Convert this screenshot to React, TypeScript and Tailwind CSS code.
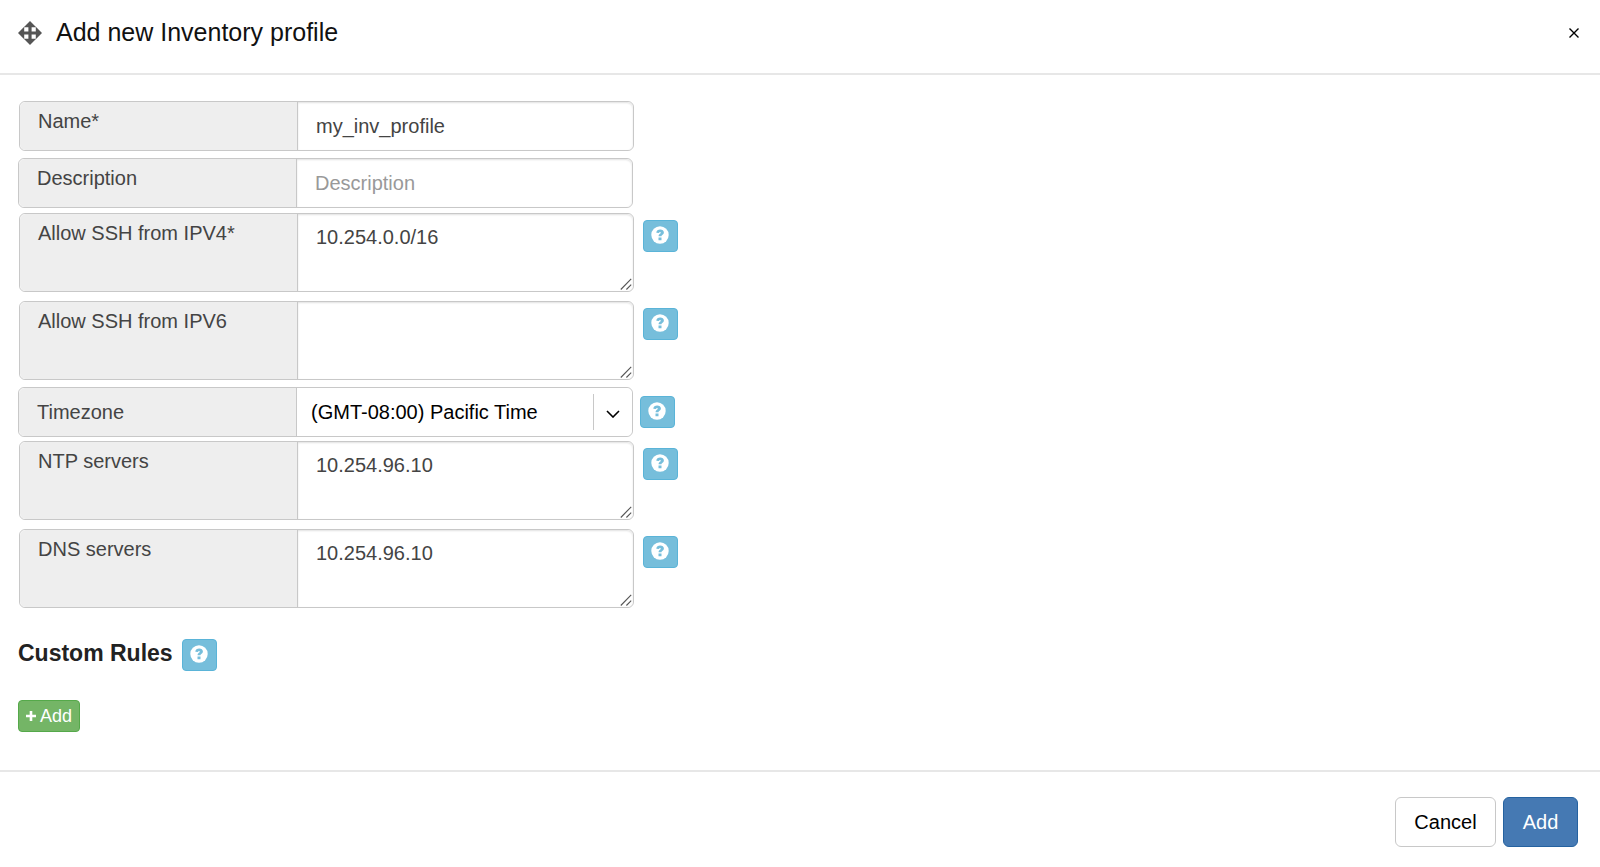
import { useState } from 'react';

const inputClass =
  'block min-w-0 flex-1 rounded-r-md bg-white px-[18px] text-xl leading-7 text-[#444] placeholder-[#999] shadow-[inset_0_1px_2px_rgba(0,0,0,0.12)] outline-none';

const MoveIcon = () => (
  <svg viewBox="0 0 24 24" className="size-6 shrink-0 fill-[#555]" aria-hidden="true">
    <path d="M12 0l6.200 6.200h-4.600v4.200h4.200V5.800L24 12l-6.200 6.200v-4.600h-4.200v4.200h4.600L12 24l-6.200-6.200h4.600v-4.200H6.200v4.600L0 12l6.200-6.200v4.600h4.200V6.200H5.800z" />
  </svg>
);

const HelpButton = ({ topic }: { topic: string }) => (
  <button
    type="button"
    aria-label={'Help: ' + topic}
    className="flex h-8 w-[35px] shrink-0 rounded border border-[#5ab4d8] bg-[#76bedb] pt-[5px] pl-[7px]"
  >
    <svg viewBox="0 0 18 18" className="size-[18px]" aria-hidden="true">
      <circle cx="9" cy="9" r="8.7" fill="#fff" />
      <path
        d="M5.300 6.700C5.500 4.500 7 3.500 9.200 3.500c2.100 0 3.700 1.100 3.700 3.100 0 1.300-.8 2-1.600 2.500-.6.400-.8.700-.8 1.200H7.600c0-1.400.5-2 1.300-2.500.6-.4.900-.6.900-1.100s-.3-.7-.8-.7c-.6 0-.9.300-.9.900zM7.500 11.400h3v2.900h-3z"
        fill="#76bedb"
      />
    </svg>
  </button>
);

type FieldProps = {
  id: string;
  label: string;
  value: string;
  onChange: (value: string) => void;
};

const TextField = ({ id, label, value, onChange, placeholder }: FieldProps & { placeholder?: string }) => (
  <div className="flex h-[50px] w-full max-w-[615px] rounded-md border border-[#c8c8c8]">
    <label htmlFor={id} className="w-[278px] shrink-0 rounded-l-md border-r border-[#c8c8c8] bg-[#eee] px-[18px] pt-[5px] text-xl leading-7 text-[#444]">
      {label}
    </label>
    <input
      id={id}
      type="text"
      value={value}
      placeholder={placeholder}
      onChange={(e) => onChange(e.target.value)}
      className={inputClass}
    />
  </div>
);

const AreaField = ({ id, label, value, onChange }: FieldProps) => (
  <div className="ml-px flex gap-[9px]">
    <div className="relative flex h-[79px] w-full max-w-[615px] rounded-md border border-[#c8c8c8]">
      <label htmlFor={id} className="w-[278px] shrink-0 rounded-l-md border-r border-[#c8c8c8] bg-[#eee] px-[18px] pt-[5px] text-xl leading-7 text-[#444]">
        {label}
      </label>
      <textarea id={id} value={value} onChange={(e) => onChange(e.target.value)} className={`${inputClass} resize-none pt-[9px]`} />
      {/* Resize grip */}
      <svg viewBox="0 0 12 12" className="pointer-events-none absolute right-px bottom-px size-3 stroke-[#555]" strokeWidth="1.1" aria-hidden="true">
        <path d="M.8 11.500L11.200.8M6.400 11.500l4.800-4.900" />
      </svg>
    </div>
    <div className="pt-[7px]">
      <HelpButton topic={label} />
    </div>
  </div>
);

export default function App() {
  const [name, setName] = useState('my_inv_profile');
  const [description, setDescription] = useState('');
  const [ipv4, setIpv4] = useState('10.254.0.0/16');
  const [ipv6, setIpv6] = useState('');
  const [ntp, setNtp] = useState('10.254.96.10');
  const [dns, setDns] = useState('10.254.96.10');

  return (
    <div className="bg-white font-['Liberation_Sans',Arial,sans-serif] text-black">
      {/* Header */}
      <header className="flex items-center border-b-2 border-[#e7e7e7] px-[18px] pt-4 pb-6">
        <MoveIcon />
        <h1 className="ml-3.5 text-[25px] leading-[33px] text-[#111]">Add new Inventory profile</h1>
        <button type="button" aria-label="Close" className="ml-auto flex size-4 items-center justify-center">
          <svg viewBox="0 0 10 10" className="size-2.5 stroke-black" strokeWidth="1.4" aria-hidden="true">
            <path d="M.5.5l9 9M9.500.5l-9 9" />
          </svg>
        </button>
      </header>

      {/* Profile form */}
      <main className="px-[18px] pt-[26px] pb-[38px]">
        <div className="ml-px">
          <TextField id="name" label="Name*" value={name} onChange={setName} />
        </div>
        <div className="mt-[7px]">
          <TextField id="description" label="Description" value={description} onChange={setDescription} placeholder="Description" />
        </div>
        <div className="mt-[5px] flex flex-col gap-[9px]">
          <AreaField id="ipv4" label="Allow SSH from IPV4*" value={ipv4} onChange={setIpv4} />
          <AreaField id="ipv6" label="Allow SSH from IPV6" value={ipv6} onChange={setIpv6} />
        </div>

        <div className="mt-[7px] flex items-center gap-[7px]">
          <div className="flex h-[50px] w-full max-w-[615px] rounded-md border border-[#c8c8c8]">
            <label htmlFor="timezone" className="flex w-[278px] shrink-0 items-center rounded-l-md border-r border-[#c8c8c8] bg-[#eee] px-[18px] text-xl leading-7 text-[#444]">
              Timezone
            </label>
            <div className="relative flex min-w-0 flex-1">
              <select id="timezone" className="w-full appearance-none rounded-r-md bg-white pr-10 pl-3.5 text-xl text-black outline-none">
                <option>(GMT-08:00) Pacific Time</option>
              </select>
              <span className="pointer-events-none absolute inset-y-1.5 right-0 flex w-[39px] items-center justify-center border-l border-[#c8c8c8]">
                <svg viewBox="0 0 14 8" className="mt-1 h-2 w-3.5 fill-none stroke-black" strokeWidth="1.6" aria-hidden="true">
                  <path d="M1 1l6 6 6-6" />
                </svg>
              </span>
            </div>
          </div>
          <HelpButton topic="Timezone" />
        </div>

        <div className="mt-1 flex flex-col gap-[9px]">
          <AreaField id="ntp" label="NTP servers" value={ntp} onChange={setNtp} />
          <AreaField id="dns" label="DNS servers" value={dns} onChange={setDns} />
        </div>

        {/* Custom rules */}
        <div className="mt-[31px] flex gap-[9px]">
          <h2 className="text-[23px] leading-7 font-bold text-[#222]">Custom Rules</h2>
          <HelpButton topic="Custom Rules" />
        </div>
        <button type="button" className="mt-[29px] flex h-8 items-center gap-1 rounded border border-[#55a94a] bg-[#74b566] px-[7px] text-lg text-white">
          <svg viewBox="0 0 10 10" className="size-2.5 fill-white" aria-hidden="true">
            <path d="M3.700 0h2.600v3.700H10v2.600H6.300V10H3.700V6.300H0V3.700h3.700z" />
          </svg>
          Add
        </button>
      </main>

      {/* Footer */}
      <footer className="flex justify-end gap-[7px] border-t-2 border-[#e7e7e7] px-[22px] py-[25px] text-xl">
        <button type="button" className="h-[50px] min-w-[101px] rounded-md border border-[#c8c8c8] bg-white px-4 text-black">
          Cancel
        </button>
        <button type="button" className="h-[50px] min-w-[75px] rounded-md border border-[#2562a0] bg-[#4579b3] px-4 text-white">
          Add
        </button>
      </footer>
    </div>
  );
}
